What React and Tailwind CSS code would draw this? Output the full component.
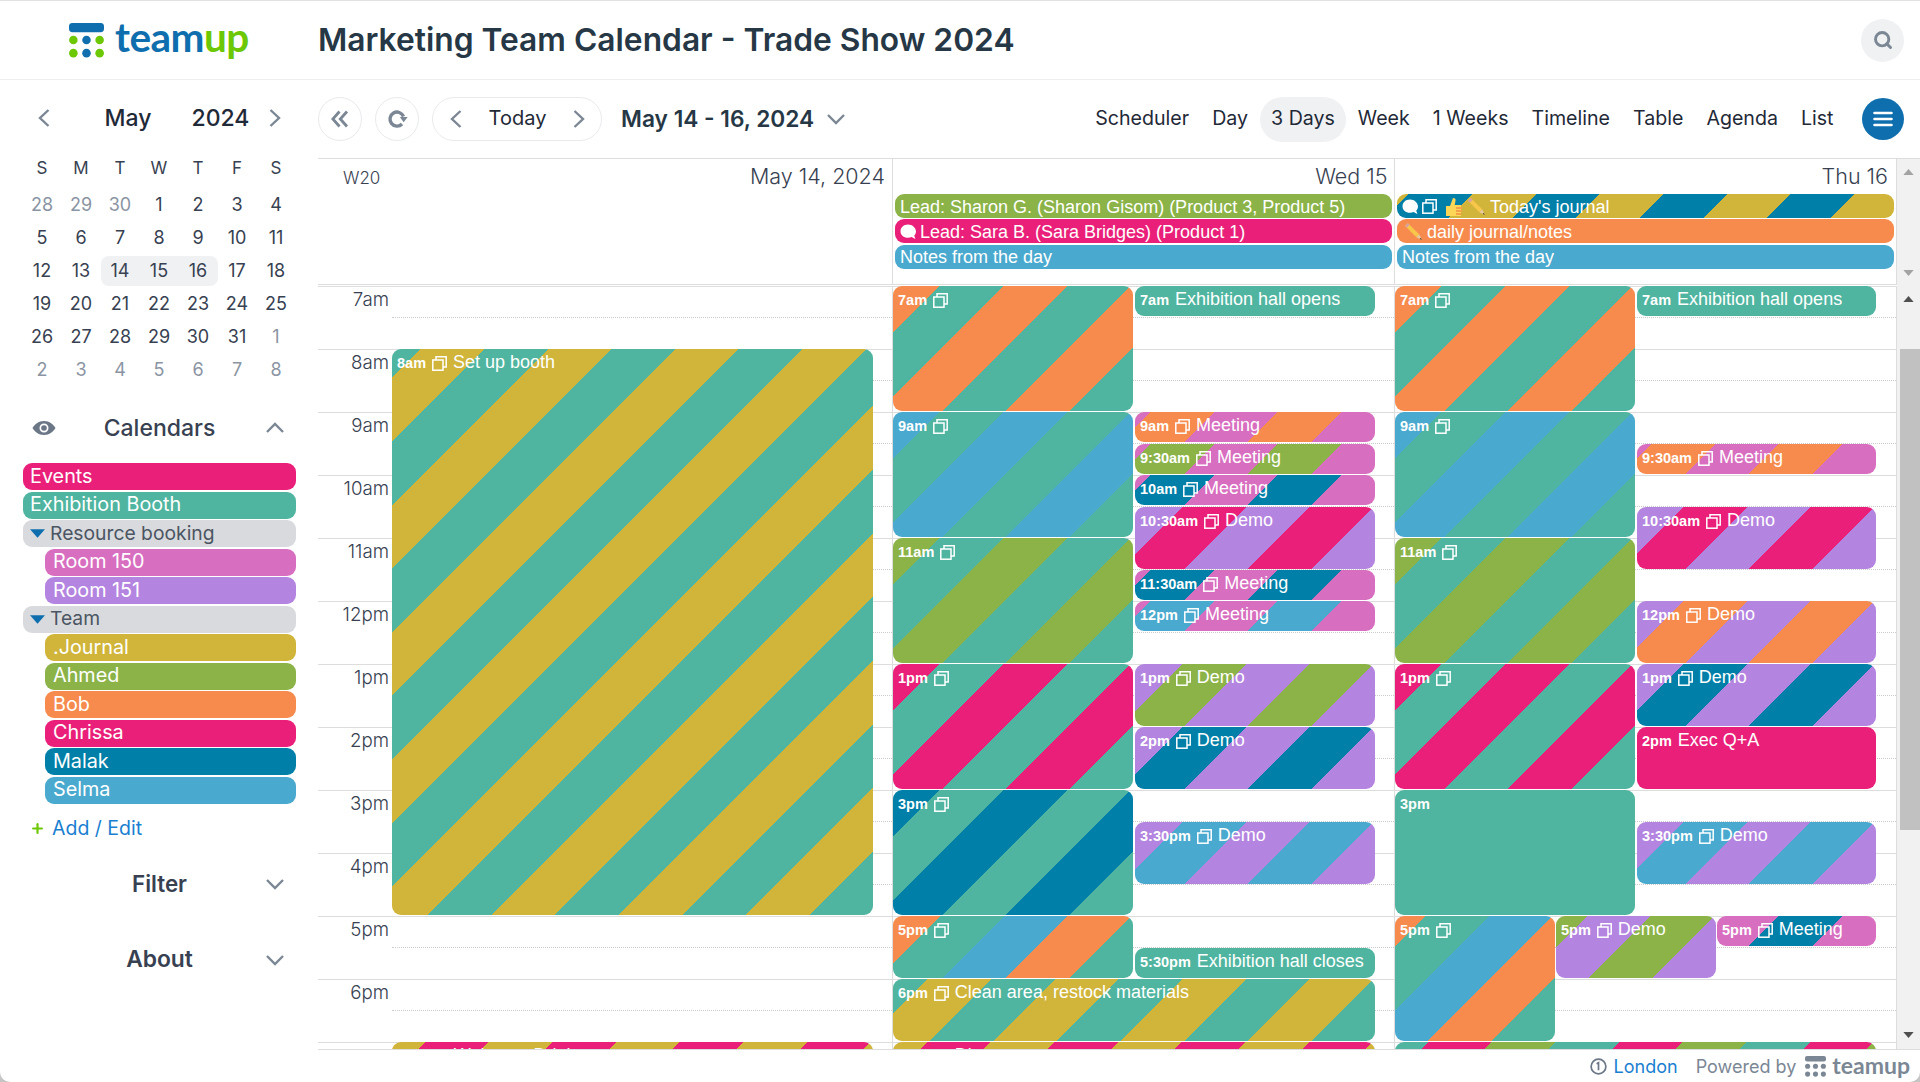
import React from "react";
import { Search, Plus } from "lucide-react";

const C = {
  pink: "#ea1f79",
  teal: "#4fb5a0",
  r150: "#d86ebf",
  r151: "#b485e0",
  jour: "#d0b53a",
  ahmed: "#8bb348",
  bob: "#f68b4d",
  malak: "#0080a8",
  selma: "#4aa9ce",
};

function stripes(cols) {
  if (cols.length === 1) return { backgroundColor: cols[0] };
  const parts = cols.map((c, i) => `${c} ${i * 45}px ${(i + 1) * 45}px`);
  return { backgroundImage: `repeating-linear-gradient(-45deg, ${parts.join(", ")})` };
}

const ChevL = ({ className = "" }) => (
  <svg viewBox="0 0 14 20" className={"w-[14px] h-[20px] shrink-0 " + className} fill="none" stroke="#7b8794" strokeWidth="2.400">
    <path d="M11.500 2L3 10l8.500 8" />
  </svg>
);
const ChevR = ({ className = "" }) => (
  <svg viewBox="0 0 14 20" className={"w-[14px] h-[20px] shrink-0 " + className} fill="none" stroke="#7b8794" strokeWidth="2.400">
    <path d="M2.500 2L11 10l-8.500 8" />
  </svg>
);
const ChevD = ({ className = "" }) => (
  <svg viewBox="0 0 20 12" className={"w-[20px] h-[12px] shrink-0 " + className} fill="none" stroke="#7b8794" strokeWidth="2.400">
    <path d="M2 2l8 8 8-8" />
  </svg>
);
const ChevU = ({ className = "" }) => (
  <svg viewBox="0 0 20 12" className={"w-[20px] h-[12px] shrink-0 " + className} fill="none" stroke="#7b8794" strokeWidth="2.400">
    <path d="M2 10l8-8 8 8" />
  </svg>
);

const CopyIcon = ({ className = "" }) => (
  <svg viewBox="0 0 15 15" className={"w-[15px] h-[15px] shrink-0 " + className} fill="none" stroke="white" strokeWidth="1.500">
    <rect x="0.800" y="4" width="10.200" height="10.200" />
    <path d="M4 4V0.800H14.200V11H11" />
  </svg>
);

const Bubble = () => (
  <svg viewBox="0 0 15 15" className="w-[16px] h-[16px] shrink-0">
    <path d="M7.500 0.500C3.400 0.500 0.500 3.200 0.500 6.800s2.900 6.200 7 6.200c1.400 0 2.400-.2 3.400-.7l3 1.600c.5 0 .6-.3.4-.6l-1-2.400c1-1.100 1.700-2.500 1.700-4.100C14.500 3.200 11.600 .5 7.500 .5z" fill="white" />
  </svg>
);

const Thumb = () => (
  <svg viewBox="0 0 18 20" className="w-[18px] h-[20px] shrink-0">
    <path d="M1 9h4v10H1zM5 9l3-8c2 0 3 1 2.500 3l-.8 4H16v11H5z" fill="#fcd757" />
    <path d="M11 10h6v2h-6zM11 13h6v2h-6zM11 16h5v2h-5z" fill="#f5a04a" />
  </svg>
);

const Pencil = () => (
  <svg viewBox="0 0 20 20" className="w-[19px] h-[19px] shrink-0">
    <path d="M1 4l3-3 12 12-3 3z" fill="#f7c64a" />
    <path d="M1 4l3-3 2 2-3 3z" fill="#d9a0a0" />
    <path d="M13 16l3-3 3 6z" fill="#e8c9a0" />
    <path d="M17.500 16.500l1.500 2.500-2.500-1.200z" fill="#5a4632" />
  </svg>
);

function LogoMark({ bar, a, b }) {
  return (
    <svg viewBox="0 0 36 36" className="w-full h-full">
      <rect x="0" y="0" width="36" height="9.500" rx="3.500" fill={bar} />
      {[17.5, 31].map((y) =>
        [4.5, 18, 31.5].map((x) => <circle key={x + "-" + y} cx={x} cy={y} r="4.400" fill={x === 18 ? b : a} />)
      )}
    </svg>
  );
}

const mini = [
  ["28", "29", "30", "1", "2", "3", "4"],
  ["5", "6", "7", "8", "9", "10", "11"],
  ["12", "13", "14", "15", "16", "17", "18"],
  ["19", "20", "21", "22", "23", "24", "25"],
  ["26", "27", "28", "29", "30", "31", "1"],
  ["2", "3", "4", "5", "6", "7", "8"],
];

function MiniCal() {
  return (
    <div className="w-[273px] ml-[22.500px]">
      <div className="h-[76px] flex items-center text-[23px] font-medium text-[#1f2937]">
        <ChevL className="ml-[14px]" />
        <span className="ml-[54px] w-[87px]">May</span>
        <span>2024</span>
        <ChevR className="ml-auto mr-[14px]" />
      </div>
      <div className="grid grid-cols-7 h-[24px] mb-[8px] text-[17px] text-[#374151] text-center items-center">
        {["S", "M", "T", "W", "T", "F", "S"].map((d, i) => (
          <span key={i}>{d}</span>
        ))}
      </div>
      {mini.map((row, r) => (
        <div key={r} className="grid grid-cols-7 h-[33px] items-center text-center text-[18px] text-[#374151]">
          {row.map((d, i) => {
            const muted = (r === 0 && i < 3) || (r === 4 && i === 6) || r === 5;
            const sel = r === 2 && i >= 2 && i <= 4;
            return (
              <span
                key={i}
                className={
                  "h-[30px] leading-[30px] " +
                  (muted ? "text-[#8a94a3] " : "") +
                  (sel ? "bg-[#f0f1f3] " : "") +
                  (sel && i === 2 ? "rounded-l-[8px] " : "") +
                  (sel && i === 4 ? "rounded-r-[8px] " : "")
                }
              >
                {d}
              </span>
            );
          })}
        </div>
      ))}
    </div>
  );
}

const calRows = [
  ["Events", C.pink, 0],
  ["Exhibition Booth", C.teal, 0],
  ["Resource booking", null, 0],
  ["Room 150", C.r150, 1],
  ["Room 151", C.r151, 1],
  ["Team", null, 0],
  [".Journal", C.jour, 1],
  ["Ahmed", C.ahmed, 1],
  ["Bob", C.bob, 1],
  ["Chrissa", C.pink, 1],
  ["Malak", C.malak, 1],
  ["Selma", C.selma, 1],
];

function Sidebar() {
  return (
    <aside className="w-[318px] shrink-0 font-['Inter',sans-serif]">
      <MiniCal />
      <div className="w-[273px] ml-[23px] mt-[20px]">
        <div className="h-[44px] flex items-center justify-between text-[#374151]">
          <svg viewBox="0 0 24 16" className="w-[24px] h-[16px] ml-[9px]">
            <path fillRule="evenodd" d="M12 1C6.500 1 2.500 4.500 .5 8c2 3.500 6 7 11.500 7s9.500-3.500 11.500-7C21.500 4.500 17.500 1 12 1zm0 2.500a4.500 4.500 0 110 9 4.500 4.500 0 010-9z" fill="#6b7686" />
            <circle cx="12" cy="8" r="2.800" fill="#6b7686" />
          </svg>
          <span className="text-[23px] font-medium -ml-[2px]">Calendars</span>
          <ChevU className="mr-[11px]" />
        </div>
        <div className="mt-[13px]">
          {calRows.map(([name, color, indent]) => (
            <div
              key={name}
              className={
                "h-[27px] mb-[1.500px] rounded-[9px] flex items-center leading-none " +
                (indent ? "ml-[22px] pl-[8px] " : "pl-[7px] ") +
                (color ? "text-white text-[19.800px]" : "bg-[#d9dadd] text-[#4b5563] text-[19.300px]")
              }
              style={color ? { backgroundColor: color } : undefined}
            >
              {!color && (
                <svg viewBox="0 0 16 9" className="w-[15px] h-[9px] mr-[5px] shrink-0">
                  <path d="M0 0h16L8 9z" fill="#0f6fae" />
                </svg>
              )}
              {name}
            </div>
          ))}
        </div>
        <div className="mt-[13px] h-[24px] flex items-center text-[19.500px] text-[#1a7fd1] pl-[7px]">
          <Plus className="w-[15px] h-[15px] text-[#6cc704] mr-[7px]" strokeWidth={3.500} />
          Add / Edit
        </div>
        <div className="mt-[21px] h-[44px] flex items-center justify-between text-[#374151] text-[22.400px] font-semibold">
          <span className="w-[31px]" />
          <span>Filter</span>
          <ChevD className="mr-[11px]" />
        </div>
        <div className="mt-[32px] h-[44px] flex items-center justify-between text-[#374151] text-[22.800px] font-semibold">
          <span className="w-[31px]" />
          <span>About</span>
          <ChevD className="mr-[11px]" />
        </div>
      </div>
    </aside>
  );
}

const views = ["Scheduler", "Day", "3 Days", "Week", "1 Weeks", "Timeline", "Table", "Agenda", "List"];

function Toolbar() {
  return (
    <div className="h-[78px] flex items-center font-['Inter',sans-serif] text-[#1f2937]">
      <button className="w-[44px] h-[44px] rounded-full border border-[#e8eaed] flex items-center justify-center">
        <svg viewBox="0 0 18 18" className="w-[18px] h-[18px]" fill="none" stroke="#7b8794" strokeWidth="2.800">
          <path d="M8.500 1.500L1.800 9l6.700 7.500M16 1.500L9.300 9l6.700 7.500" />
        </svg>
      </button>
      <button className="ml-[13px] w-[44px] h-[44px] rounded-full border border-[#e8eaed] flex items-center justify-center">
        <svg viewBox="0 0 21 20" className="w-[21px] h-[20px]">
          <path d="M15 15A7 7 0 1 1 16.500 7.500" fill="none" stroke="#7b8794" strokeWidth="3.400" />
          <path d="M12.800 8h7.800l-3.900 5.200z" fill="#7b8794" />
        </svg>
      </button>
      <div className="ml-[13px] h-[44px] w-[170px] rounded-full border border-[#e8eaed] flex items-center">
        <span className="w-[45px] flex justify-center">
          <ChevL />
        </span>
        <span className="w-[79px] text-center text-[20px] leading-[40px] h-[42px]">Today</span>
        <span className="w-[44px] flex justify-center">
          <ChevR />
        </span>
      </div>
      <span className="ml-[19px] text-[22.700px] font-semibold text-[#263746]">May 14 - 16, 2024</span>
      <ChevD className="ml-[12px]" />
      <div className="ml-auto flex items-center text-[19.600px]">
        {views.map((v) => (
          <span key={v} className={"h-[45px] leading-[43px] px-[11.500px] rounded-full " + (v === "3 Days" ? "bg-[#f0f1f3]" : "")}>
            {v}
          </span>
        ))}
      </div>
      <button className="ml-[17px] mr-[16px] w-[42px] h-[42px] rounded-full bg-[#0f6fae] flex items-center justify-center">
        <svg viewBox="0 0 20 16" className="w-[20px] h-[16px]">
          <path d="M1.500 2h17M1.500 8h17M1.500 14h17" stroke="white" strokeWidth="2.600" strokeLinecap="round" />
        </svg>
      </button>
    </div>
  );
}

function EventBody({ time, title, icon }) {
  return (
    <div className="flex items-start pl-[5px] pt-[3px] text-white whitespace-nowrap font-['Liberation_Sans',sans-serif]">
      {time && <span className="text-[14.500px] font-bold leading-[22px] mr-[6px]">{time}</span>}
      {icon && <CopyIcon className="mt-[4px] mr-[6px]" />}
      {title && <span className="text-[18px] leading-[20px]">{title}</span>}
    </div>
  );
}

const T = (h, m = 0) => h - 7 + m / 60;

const dayA = [
  { t: T(8), h: 9, l: 0, w: 481, time: "8am", title: "Set up booth", c: [C.teal, C.jour], icon: 1 },
  { t: T(19), h: 2, l: 0, w: 481, time: "7pm", title: "Welcome Drinks", c: [C.pink, C.jour], icon: 1 },
];

const B2 = 242;
const dayB = [
  { t: 0, h: 2, l: 0, w: 240, time: "7am", c: [C.teal, C.bob], icon: 1 },
  { t: 2, h: 2, l: 0, w: 240, time: "9am", c: [C.teal, C.selma], icon: 1 },
  { t: 4, h: 2, l: 0, w: 240, time: "11am", c: [C.teal, C.ahmed], icon: 1 },
  { t: 6, h: 2, l: 0, w: 240, time: "1pm", c: [C.teal, C.pink], icon: 1 },
  { t: 8, h: 2, l: 0, w: 240, time: "3pm", c: [C.teal, C.malak], icon: 1 },
  { t: 10, h: 1, l: 0, w: 240, time: "5pm", c: [C.teal, C.bob, C.selma], icon: 1 },
  { t: 11, h: 1, l: 0, w: 482, time: "6pm", title: "Clean area, restock materials", c: [C.teal, C.jour], icon: 1 },
  { t: 12, h: 2, l: 0, w: 482, time: "7pm", title: "Dinner", c: [C.pink, C.jour], icon: 1 },
  { t: 0, h: 0.5, l: B2, w: 240, time: "7am", title: "Exhibition hall opens", c: [C.teal] },
  { t: 2, h: 0.5, l: B2, w: 240, time: "9am", title: "Meeting", c: [C.r150, C.bob], icon: 1 },
  { t: 2.5, h: 0.5, l: B2, w: 240, time: "9:30am", title: "Meeting", c: [C.r150, C.ahmed], icon: 1 },
  { t: 3, h: 0.5, l: B2, w: 240, time: "10am", title: "Meeting", c: [C.r150, C.malak], icon: 1 },
  { t: 3.5, h: 1, l: B2, w: 240, time: "10:30am", title: "Demo", c: [C.r151, C.pink], icon: 1 },
  { t: 4.5, h: 0.5, l: B2, w: 240, time: "11:30am", title: "Meeting", c: [C.r150, C.malak], icon: 1 },
  { t: 5, h: 0.5, l: B2, w: 240, time: "12pm", title: "Meeting", c: [C.r150, C.selma], icon: 1 },
  { t: 6, h: 1, l: B2, w: 240, time: "1pm", title: "Demo", c: [C.r151, C.ahmed], icon: 1 },
  { t: 7, h: 1, l: B2, w: 240, time: "2pm", title: "Demo", c: [C.r151, C.malak], icon: 1 },
  { t: 8.5, h: 1, l: B2, w: 240, time: "3:30pm", title: "Demo", c: [C.r151, C.selma], icon: 1 },
  { t: 10.5, h: 0.5, l: B2, w: 240, time: "5:30pm", title: "Exhibition hall closes", c: [C.teal] },
];

const dayC = [
  { t: 0, h: 2, l: 0, w: 240, time: "7am", c: [C.teal, C.bob], icon: 1 },
  { t: 2, h: 2, l: 0, w: 240, time: "9am", c: [C.teal, C.selma], icon: 1 },
  { t: 4, h: 2, l: 0, w: 240, time: "11am", c: [C.teal, C.ahmed], icon: 1 },
  { t: 6, h: 2, l: 0, w: 240, time: "1pm", c: [C.teal, C.pink], icon: 1 },
  { t: 8, h: 2, l: 0, w: 240, time: "3pm", c: [C.teal] },
  { t: 10, h: 2, l: 0, w: 160, time: "5pm", c: [C.teal, C.bob, C.selma], icon: 1 },
  { t: 12, h: 2, l: 0, w: 481, c: [C.teal, C.ahmed, C.pink] },
  { t: 0, h: 0.5, l: 242, w: 239, time: "7am", title: "Exhibition hall opens", c: [C.teal] },
  { t: 2.5, h: 0.5, l: 242, w: 239, time: "9:30am", title: "Meeting", c: [C.r150, C.bob], icon: 1 },
  { t: 3.5, h: 1, l: 242, w: 239, time: "10:30am", title: "Demo", c: [C.r151, C.pink], icon: 1 },
  { t: 5, h: 1, l: 242, w: 239, time: "12pm", title: "Demo", c: [C.r151, C.bob], icon: 1 },
  { t: 6, h: 1, l: 242, w: 239, time: "1pm", title: "Demo", c: [C.r151, C.malak], icon: 1 },
  { t: 7, h: 1, l: 242, w: 239, time: "2pm", title: "Exec Q+A", c: [C.pink] },
  { t: 8.5, h: 1, l: 242, w: 239, time: "3:30pm", title: "Demo", c: [C.r151, C.selma], icon: 1 },
  { t: 10, h: 1, l: 161, w: 160, time: "5pm", title: "Demo", c: [C.r151, C.ahmed], icon: 1 },
  { t: 10, h: 0.5, l: 322, w: 159, time: "5pm", title: "Meeting", c: [C.r150, C.malak], icon: 1 },
];

const hours = ["7am", "8am", "9am", "10am", "11am", "12pm", "1pm", "2pm", "3pm", "4pm", "5pm", "6pm", ""];

function DayColumn({ events, widthClass }) {
  return (
    <div className={"relative shrink-0 border-r border-[#dddddd] " + widthClass}>
      {hours.map((h, i) => (
        <div key={i} className="h-[63px] border-t border-[#dddddd]">
          <div className="h-[31px] border-b border-dotted border-[#cccccc]" />
        </div>
      ))}
      {events.map((e, i) => (
        <div
          key={i}
          className="absolute rounded-[9px] overflow-hidden"
          style={{
            top: Math.round(e.t * 63),
            height: e.h === 0.5 ? 30 : e.h * 63 - 1,
            left: e.l,
            width: e.w,
            ...stripes(e.c),
          }}
        >
          <EventBody time={e.time} title={e.title} icon={e.icon} />
        </div>
      ))}
    </div>
  );
}

function Pill({ c, children }) {
  return (
    <div className="h-[24px] mb-[1.300px] mx-[2px] rounded-[9px] flex items-center pl-[5px] pt-[1px] gap-[4px] text-white text-[18px] leading-[24px] whitespace-nowrap font-['Liberation_Sans',sans-serif] overflow-hidden" style={stripes(c)}>
      {children}
    </div>
  );
}

function Triangle({ up, color }) {
  return (
    <svg viewBox="0 0 12 7" className="w-[11px] h-[6px]">
      <path d={up ? "M6 0l6 7H0z" : "M0 0h12L6 7z"} fill={color} />
    </svg>
  );
}

function Calendar() {
  const dayHead = "h-[35px] flex items-center justify-end text-[21.500px] text-[#374151] font-light font-['Inter',sans-serif]";
  return (
    <div className="flex-1 min-h-0 flex flex-col border-t border-[#dddddd]">
      <div className="h-[127px] shrink-0 flex">
        <div className="flex-1 flex border-b border-[#dddddd] h-[126px]">
          <div className="w-[74px] pl-[25px] pt-[7px] text-[17px] text-[#374151] font-['Inter',sans-serif] font-light">W20</div>
          <div className="w-[501px] border-r border-[#dddddd]">
            <div className={dayHead + " pr-[7px]"}>May 14, 2024</div>
          </div>
          <div className="w-[502px] border-r border-[#dddddd]">
            <div className={dayHead + " pr-[6.500px]"}>Wed 15</div>
            <Pill c={[C.ahmed]}>Lead: Sharon G. (Sharon Gisom) (Product 3, Product 5)</Pill>
            <Pill c={[C.pink]}><Bubble />Lead: Sara B. (Sara Bridges) (Product 1)</Pill>
            <Pill c={[C.selma]}>Notes from the day</Pill>
          </div>
          <div className="w-[502px] border-r border-[#dddddd]">
            <div className={dayHead + " pr-[8px]"}>Thu 16</div>
            <Pill c={[C.jour, C.malak]}><Bubble /><CopyIcon className="mr-[4px]" /><Thumb /><Pencil /><span>Today's journal</span></Pill>
            <Pill c={[C.bob]}><span className="ml-[2px]"><Pencil /></span><span>daily journal/notes</span></Pill>
            <Pill c={[C.selma]}>Notes from the day</Pill>
          </div>
        </div>
        <div className="w-[23px] shrink-0 bg-[#f1f1f1] flex flex-col items-center justify-between pt-[10px] pb-[10px]">
          <Triangle up color="#a3a3a3" />
          <Triangle color="#a3a3a3" />
        </div>
      </div>
      <div className="flex-1 min-h-0 flex overflow-hidden">
        <div className="w-[74px] shrink-0">
          {hours.map((h, i) => (
            <div key={i} className="h-[63px] border-t border-[#dddddd] pr-[3px] pt-[2px] text-right text-[18.700px] leading-[22px] text-[#374151] font-['Inter',sans-serif] font-light">
              {h}
            </div>
          ))}
        </div>
        <DayColumn events={dayA} widthClass="w-[501px]" />
        <DayColumn events={dayB} widthClass="w-[502px]" />
        <DayColumn events={dayC} widthClass="w-[502px]" />
        <div className="w-[23px] shrink-0 bg-[#f1f1f1] flex flex-col">
          <div className="h-[24px] flex items-center justify-center pt-[2px]">
            <Triangle up color="#505050" />
          </div>
          <div className="h-[39px]" />
          <div className="h-[481px] ml-[3px] bg-[#c1c1c1]" />
          <div className="flex-1" />
          <div className="h-[24px] flex items-center justify-center pb-[5px]">
            <Triangle color="#505050" />
          </div>
        </div>
      </div>
    </div>
  );
}

function Footer() {
  return (
    <div className="h-[33px] shrink-0 border-t border-[#dddddd] flex items-center justify-end pr-[10px] pt-[1px] font-['Inter',sans-serif] text-[18px]">
      <svg viewBox="0 0 18 18" className="w-[17px] h-[17px] mr-[7px]" fill="none" stroke="#6b7686" strokeWidth="1.800">
        <circle cx="9" cy="9" r="7.800" />
        <path d="M7 6l2-1v8" />
      </svg>
      <span className="text-[#1a7fd1]">London</span>
      <span className="ml-[18px] text-[#7b8794]">Powered by</span>
      <span className="w-[21px] h-[21px] ml-[9px] block">
        <LogoMark bar="#7b8794" a="#7b8794" b="#7b8794" />
      </span>
      <span className="ml-[6px] text-[#7b8794] text-[23px] font-bold font-['Lato',sans-serif] -mt-[3px]">teamup</span>
    </div>
  );
}

export default function App() {
  return (
    <div className="w-[1920px] h-[1082px] overflow-hidden bg-[#c4c4c4]">
      <div className="w-full h-full bg-white rounded-b-[10px] overflow-hidden flex flex-col border-t border-[#e2e2e2]">
        <header className="h-[79px] shrink-0 border-b border-[#eceef0] flex items-center">
          <div className="w-[318px] shrink-0 flex items-center pl-[69px]">
            <span className="w-[35px] h-[35px] block shrink-0">
              <LogoMark bar="#0f6fae" a="#6cc704" b="#0f6fae" />
            </span>
            <span className="ml-[11px] -mt-[5px] text-[40.500px] leading-none font-bold font-['Lato',sans-serif] text-[#0f6fae] tracking-[-0.5px]">
              team<span className="text-[#6cc704]">up</span>
            </span>
          </div>
          <h1 className="text-[31.750px] font-semibold text-[#263746] font-['Inter',sans-serif] whitespace-nowrap -mt-[1px]">
            Marketing Team Calendar - Trade Show 2024
          </h1>
          <button className="ml-auto mr-[16px] w-[43px] h-[43px] rounded-full bg-[#f0f1f3] flex items-center justify-center">
            <Search className="w-[20px] h-[20px] text-[#7b8794]" strokeWidth={3.500} />
          </button>
        </header>
        <div className="flex-1 min-h-0 flex">
          <Sidebar />
          <main className="flex-1 min-w-0 flex flex-col">
            <Toolbar />
            <Calendar />
            <Footer />
          </main>
        </div>
      </div>
    </div>
  );
}
